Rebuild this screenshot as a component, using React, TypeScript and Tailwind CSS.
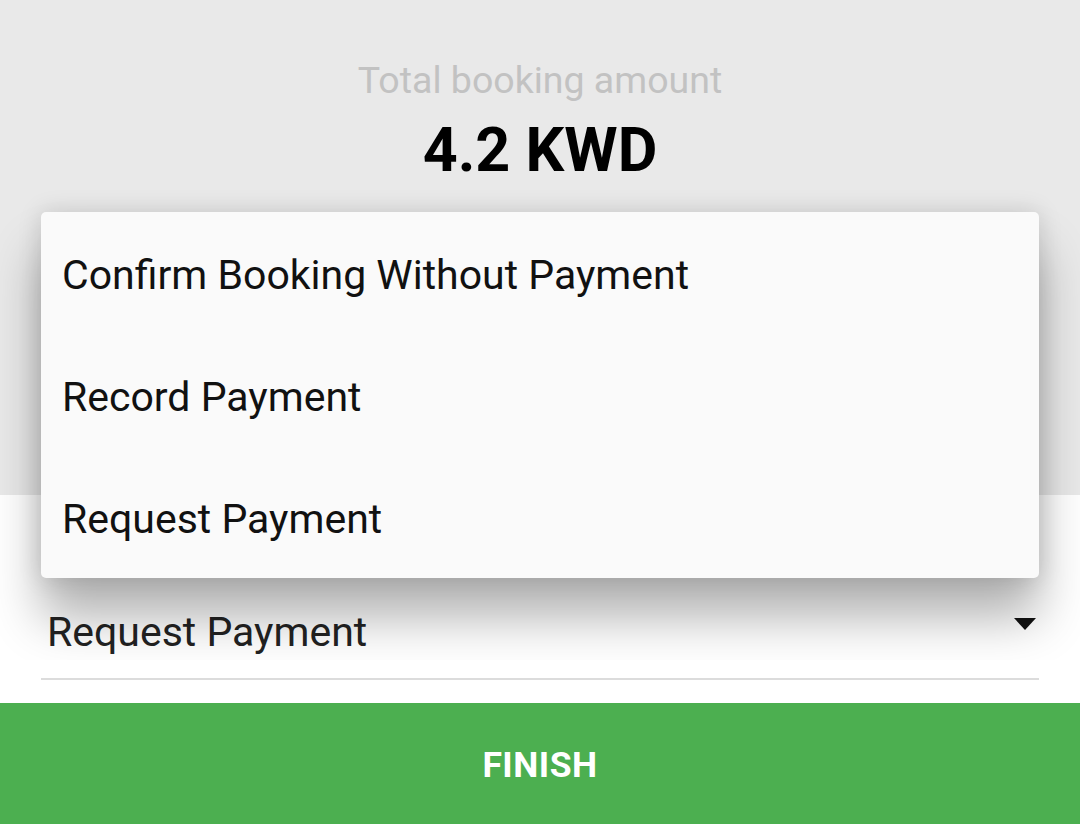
import React, { useState } from 'react';

const options = ['Confirm Booking Without Payment', 'Record Payment', 'Request Payment'];

const App: React.FC = () => {
  const [selected, setSelected] = useState('Request Payment');
  const [open, setOpen] = useState(true);

  return (
    <div
      className="relative flex h-[824px] w-[1080px] flex-col overflow-hidden bg-white"
      style={{ fontFamily: 'Roboto, "Noto Sans", sans-serif' }}
    >
      {/* Summary */}
      <div className="flex h-[495px] flex-col items-center bg-[#e9e9e9] pt-[56px]">
        <p className="text-[37.5px] leading-[48px] text-[#c2c2c2]">Total booking amount</p>
        <p className="mt-[14px] text-[61px] font-bold leading-[64px] text-black">4.2 KWD</p>
      </div>

      {/* Payment method select */}
      <div className="flex flex-1 flex-col justify-end px-[41px] pb-[23px]">
        <button
          className="flex h-[70px] items-center justify-between pl-[6px] pr-[2px] pt-[8px] text-left"
          onClick={() => setOpen(!open)}
        >
          <span className="text-[41px] text-[#222]">{selected}</span>
          <svg width="24" height="14" viewBox="0 0 24 14" className="mb-[18px]">
            <path d="M1 1 L23 1 L12 13 Z" fill="#111" />
          </svg>
        </button>
        <div className="mt-[14px] h-[2px] bg-[#dcdcdc]" />
      </div>

      {/* Finish */}
      <button className="h-[121px] w-full bg-[#4caf50] pt-[4px] text-[35.5px] font-bold tracking-[0.5px] text-white">
        FINISH
      </button>

      {/* Dropdown popup */}
      {open && (
        <div className="absolute inset-x-0 top-0 h-[660px] overflow-hidden">
          <div className="mx-[41px] mt-[212px] rounded-[5px] bg-[#fafafa] shadow-[0_40px_50px_rgba(0,0,0,0.3),0_0_24px_rgba(0,0,0,0.14)]">
            {options.map((o) => (
              <div
                key={o}
                className="flex h-[122px] cursor-pointer items-center px-[21px] pt-[6px] text-[41px] text-[#111]"
                onClick={() => {
                  setSelected(o);
                  setOpen(false);
                }}
              >
                {o}
              </div>
            ))}
          </div>
        </div>
      )}
    </div>
  );
};

export default App;
